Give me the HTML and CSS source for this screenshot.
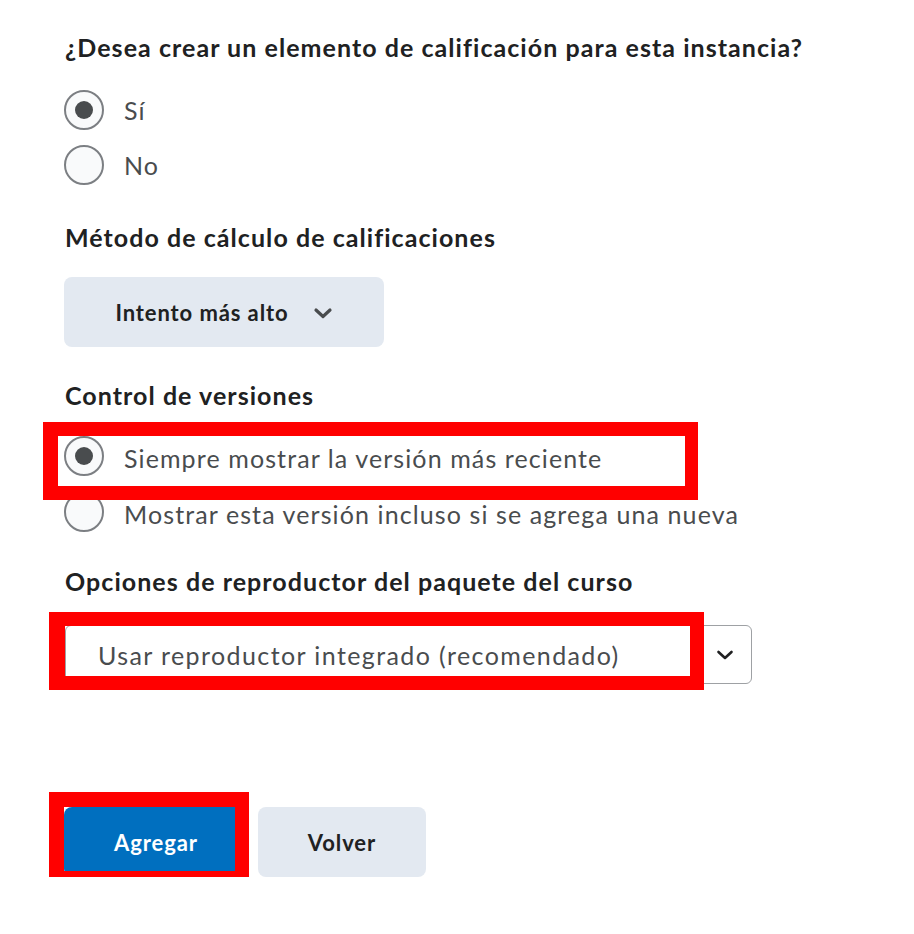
FILE: index.html
```html
<!DOCTYPE html>
<html lang="es">
<head>
<meta charset="utf-8">
<title>Opciones</title>
<link rel="stylesheet" href="styles.css">
</head>
<body>
<main class="form">
  <section class="group group-grade">
    <h2 class="label">¿Desea crear un elemento de calificación para esta instancia?</h2>
    <div class="radios">
      <label class="radio-row"><span class="radio checked"></span><span class="radio-text">Sí</span></label>
      <label class="radio-row"><span class="radio"></span><span class="radio-text">No</span></label>
    </div>
  </section>

  <section class="group group-method">
    <h2 class="label">Método de cálculo de calificaciones</h2>
    <button class="dropdown" type="button">
      <span>Intento más alto</span>
      <svg class="chev" width="20" height="14" viewBox="0 0 20 14"><path d="M3 4 L10 10.5 L17 4" fill="none" stroke="#494c4e" stroke-width="3.2" stroke-linecap="round" stroke-linejoin="round"/></svg>
    </button>
  </section>

  <section class="group group-version">
    <h2 class="label">Control de versiones</h2>
    <div class="radios radios-version">
      <label class="radio-row highlight-wrap"><span class="radio checked"></span><span class="radio-text">Siempre mostrar la versión más reciente</span><span class="mark mark-row"></span></label>
      <label class="radio-row"><span class="radio"></span><span class="radio-text">Mostrar esta versión incluso si se agrega una nueva</span></label>
    </div>
  </section>

  <section class="group group-player">
    <h2 class="label">Opciones de reproductor del paquete del curso</h2>
    <div class="select highlight-wrap">
      <span class="select-text">Usar reproductor integrado (recomendado)</span>
      <svg class="select-chev" width="20" height="14" viewBox="0 0 20 14"><path d="M3.5 4 L10 10 L16.5 4" fill="none" stroke="#202122" stroke-width="2.6" stroke-linecap="round" stroke-linejoin="round"/></svg>
      <span class="mark mark-select"></span>
    </div>
  </section>

  <div class="actions">
    <div class="highlight-wrap">
      <button class="btn btn-primary" type="button">Agregar</button>
      <span class="mark mark-btn"></span>
    </div>
    <button class="btn btn-secondary" type="button">Volver</button>
  </div>
</main>
</body>
</html>
```
FILE: styles.css
```css
* { box-sizing: border-box; }

html, body {
  margin: 0;
  padding: 0;
  background: #ffffff;
}

body {
  font-family: Lato, "Noto Sans", "Liberation Sans", sans-serif;
  color: #494c4e;
}

.form {
  padding: 32px 0 0 65px;
  display: flex;
  flex-direction: column;
}

.label {
  margin: 0;
  font-size: 25px;
  line-height: 30px;
  letter-spacing: 1.05px;
  font-weight: 700;
  color: #202122;
  white-space: nowrap;
}

.radios {
  display: flex;
  flex-direction: column;
  gap: 15px;
  margin-top: 28px;
}

.radios-version {
  margin-top: 26px;
  gap: 16px;
}

.radio-row {
  display: flex;
  align-items: center;
  gap: 20px;
  height: 40px;
  margin-left: -1px;
}

.radio {
  width: 40px;
  height: 40px;
  border-radius: 50%;
  border: 2px solid #7c7f83;
  background: #f9fafb;
  display: flex;
  align-items: center;
  justify-content: center;
  flex: none;
}

.radio.checked::after {
  content: "";
  width: 18px;
  height: 18px;
  border-radius: 50%;
  background: #494c4e;
}

.radio-text {
  font-size: 25px;
  line-height: 30px;
  letter-spacing: 1.1px;
  color: #494c4e;
  white-space: nowrap;
}

.radios-version .radio-text { padding-top: 3px; }

.group-method { margin-top: 37px; }
.group-version { margin-top: 33px; }
.group-player { margin-top: 34px; }

.dropdown {
  margin-top: 25px;
  width: 320px;
  height: 70px;
  border: none;
  border-radius: 8px;
  background: #e3e9f1;
  display: flex;
  align-items: center;
  justify-content: center;
  gap: 24px;
  padding: 0;
  font-family: inherit;
  font-size: 22px;
  letter-spacing: 0.9px;
  font-weight: 700;
  color: #202122;
  margin-left: -1px;
}

.chev { display: block; margin-top: 2px; }

.highlight-wrap { position: relative; }

.mark {
  position: absolute;
  border: 14px solid #ff0000;
  pointer-events: none;
}

.mark-row {
  left: -21px;
  top: -14px;
  width: 655px;
  height: 78px;
  border-left-width: 15px;
  border-right-width: 13px;
}

.select {
  margin-top: 29px;
  width: 687px;
  height: 59px;
  border: 1px solid #9ea1a4;
  border-radius: 6px;
  display: flex;
  align-items: center;
  justify-content: space-between;
  padding: 0 16px 0 32px;
}

.select-text {
  font-size: 25px;
  line-height: 30px;
  letter-spacing: 1.4px;
  color: #494c4e;
  white-space: nowrap;
}

.select-chev { display: block; }

.mark-select {
  left: -17px;
  top: -14px;
  width: 655px;
  height: 78px;
  border-left-width: 16px;
}

.actions {
  margin-top: 123px;
  display: flex;
  gap: 10px;
  margin-left: -1px;
}

.btn {
  height: 70px;
  padding: 0;
  border: none;
  border-radius: 8px;
  font-family: inherit;
  font-size: 22px;
  letter-spacing: 0.9px;
  font-weight: 700;
}

.btn-primary {
  background: #006fbf;
  color: #ffffff;
  width: 184px;
  display: block;
}

.btn-secondary {
  background: #e3e9f1;
  color: #202122;
  width: 168px;
}

.mark-btn {
  left: -15px;
  top: -15px;
  width: 200px;
  height: 92px;
  border-top-width: 15px;
  border-bottom-width: 13px;
  border-left-width: 15px;
}
```
